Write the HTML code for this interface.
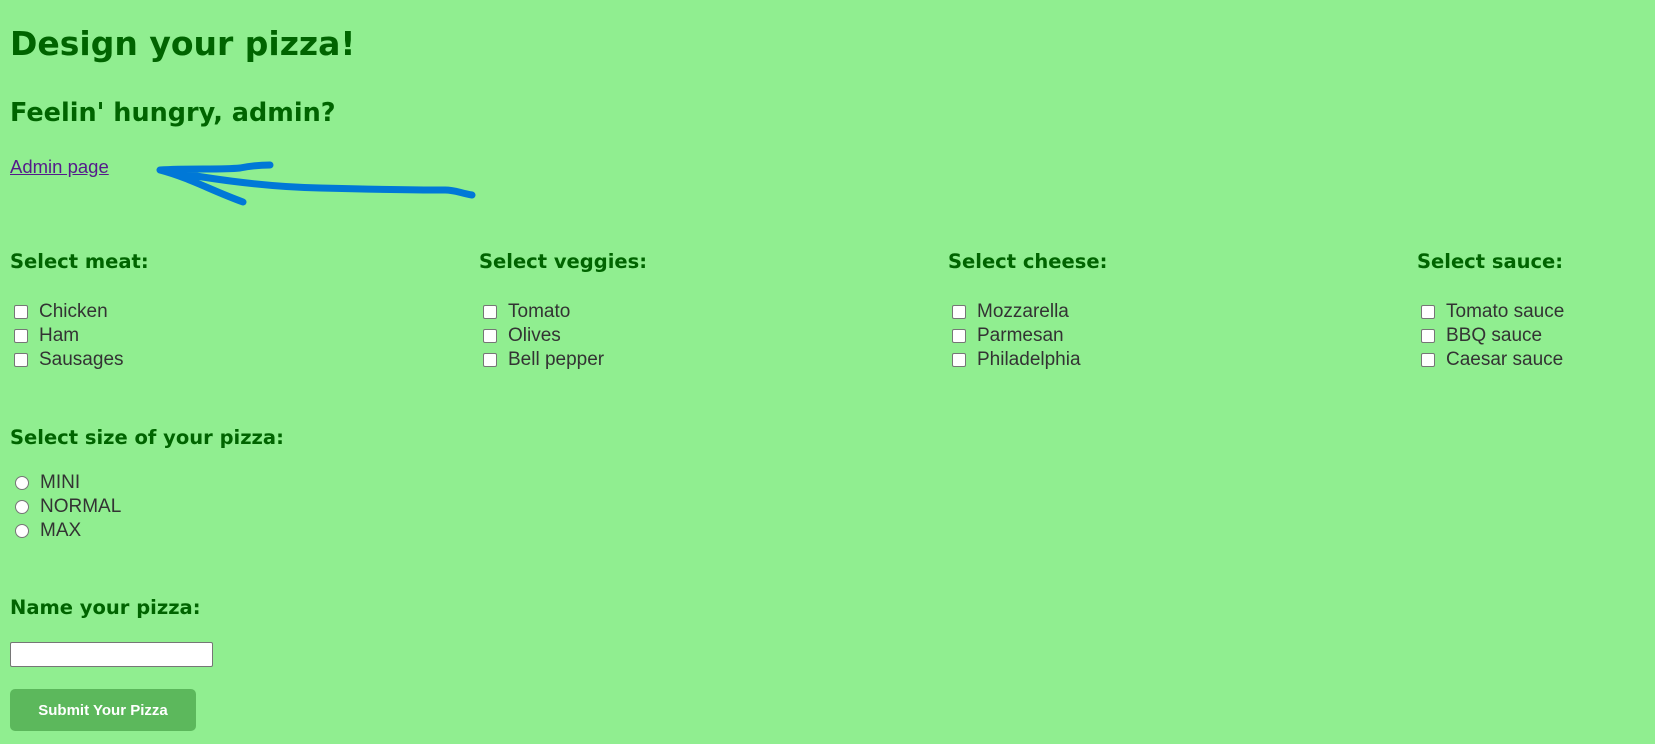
<!DOCTYPE html>
<html><head><style>
body{margin:0;width:1655px;height:744px;background:#90ee90;position:relative;overflow:hidden;font-family:"Liberation Sans",sans-serif;}
.h{position:absolute;color:#006400;font-family:"Comic Sans MS","DejaVu Sans",sans-serif;font-weight:bold;margin:0;white-space:nowrap;}
.s{font-size:19.5px;}
.col{position:absolute;}
.row{height:24px;display:flex;align-items:center;font-size:19px;color:#333;}
.cb{width:14px;height:14px;border:1px solid #767676;border-radius:2px;background:#fff;margin:0 11px 0 4px;box-sizing:border-box;}
.rd{width:14px;height:14px;border:1px solid #767676;border-radius:50%;background:#fff;margin:0 11px 0 5px;box-sizing:border-box;}
</style></head><body>
<div class="h" style="left:10px;top:24px;font-size:33px">Design your pizza!</div>
<div class="h" style="left:10px;top:98px;font-size:25.5px">Feelin' hungry, admin?</div>
<a style="position:absolute;left:10px;top:156px;font-size:18.5px;color:#551a8b;text-decoration:underline">Admin page</a>
<svg style="position:absolute;left:0;top:0" width="600" height="220"><path d="M160 170 C190 168 220 170 240 168 C250 166 260 165 270 165 M160 170 C190 178 210 190 243 202 M160 170 C200 177 260 187 320 188 C360 189 420 190 445 190 C455 190 460 193 472 195" stroke="#0078d7" stroke-width="7" fill="none" stroke-linecap="round"/></svg>

<div class="h s" style="left:10px;top:250px">Select meat:</div>
<div class="h s" style="left:479px;top:250px">Select veggies:</div>
<div class="h s" style="left:948px;top:250px">Select cheese:</div>
<div class="h s" style="left:1417px;top:250px">Select sauce:</div>

<div class="col" style="left:10px;top:300px"><div class="row"><span class="cb"></span>Chicken</div><div class="row"><span class="cb"></span>Ham</div><div class="row"><span class="cb"></span>Sausages</div></div>
<div class="col" style="left:479px;top:300px"><div class="row"><span class="cb"></span>Tomato</div><div class="row"><span class="cb"></span>Olives</div><div class="row"><span class="cb"></span>Bell pepper</div></div>
<div class="col" style="left:948px;top:300px"><div class="row"><span class="cb"></span>Mozzarella</div><div class="row"><span class="cb"></span>Parmesan</div><div class="row"><span class="cb"></span>Philadelphia</div></div>
<div class="col" style="left:1417px;top:300px"><div class="row"><span class="cb"></span>Tomato sauce</div><div class="row"><span class="cb"></span>BBQ sauce</div><div class="row"><span class="cb"></span>Caesar sauce</div></div>

<div class="h s" style="left:10px;top:426px">Select size of your pizza:</div>
<div class="col" style="left:10px;top:471px"><div class="row"><span class="rd"></span>MINI</div><div class="row"><span class="rd"></span>NORMAL</div><div class="row"><span class="rd"></span>MAX</div></div>

<div class="h s" style="left:10px;top:596px">Name your pizza:</div>
<div style="position:absolute;left:10px;top:642px;width:203px;height:25px;background:#fff;border:1px solid #767676;border-radius:2px;box-sizing:border-box"></div>
<div style="position:absolute;left:10px;top:689px;width:186px;height:42px;background:#5cb85c;border-radius:5px;color:#fff;font-weight:bold;font-size:15px;display:flex;align-items:center;justify-content:center">Submit Your Pizza</div>
</body></html>
